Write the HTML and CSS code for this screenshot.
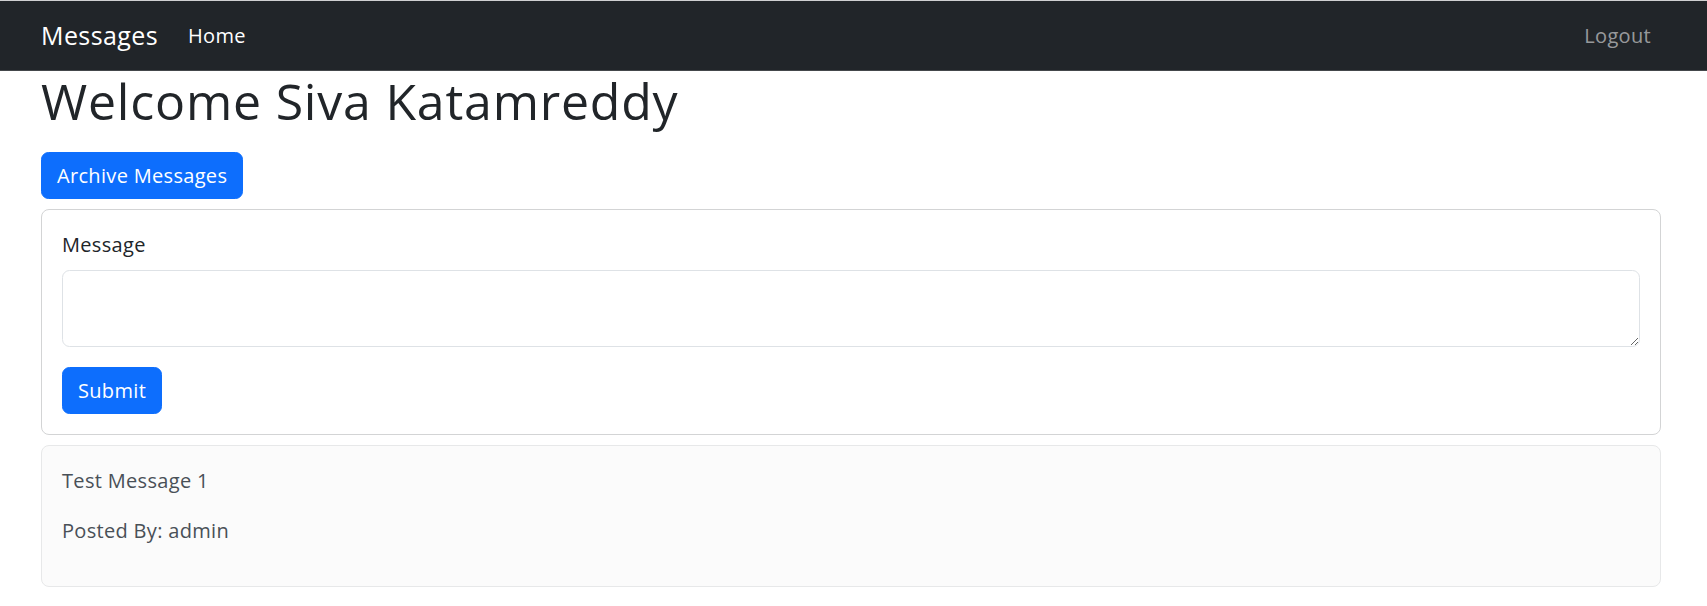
FILE: index.html
```html
<!DOCTYPE html>
<html lang="en">
<head>
<meta charset="utf-8">
<title>Messages</title>
<link rel="stylesheet" href="styles.css">
</head>
<body>
<nav class="navbar">
  <a class="brand" href="#">Messages</a>
  <ul class="nav-links">
    <li><a class="nav-link active" href="#">Home</a></li>
  </ul>
  <ul class="nav-links nav-right">
    <li><a class="nav-link" href="#">Logout</a></li>
  </ul>
</nav>
<main class="container">
  <h1 class="title">Welcome Siva Katamreddy</h1>
  <a class="btn" href="#">Archive Messages</a>
  <div class="card form-card">
    <form class="msg-form">
      <label class="form-label" for="message">Message</label>
      <textarea class="form-control" id="message" rows="2"></textarea>
      <button class="btn" type="button">Submit</button>
    </form>
  </div>
  <div class="card msg-card">
    <p>Test Message 1</p>
    <p>Posted By: admin</p>
  </div>
</main>
</body>
</html>
```
FILE: styles.css
```css
* { box-sizing: border-box; }
html, body { margin: 0; padding: 0; }
body {
  border-top: 1px solid #cfd0d1;
  background: #fff;
  color: #212529;
  font-family: "Open Sans", "Noto Sans", sans-serif;
  font-size: 20px;
  line-height: 30px;
  letter-spacing: 0.016em;
}
a { text-decoration: none; }

.navbar {
  display: flex;
  align-items: center;
  height: 70px;
  padding: 0 56px 0 41px;
  background: #212529;
  box-shadow: inset 0 -1px 0 #44474b;
}
.brand {
  color: #fff;
  font-size: 25px;
  line-height: 37.5px;
  letter-spacing: 0.016em;
  margin-right: 30px;
}
.nav-links {
  display: flex;
  list-style: none;
  margin: 0;
  padding: 0;
}
.nav-right { margin-left: auto; }
.nav-link {
  color: rgba(255, 255, 255, 0.55);
  font-size: 20px;
  line-height: 30px;
}
.nav-link.active { color: #fff; }

.container {
  padding: 0 46px 20px 41px;
}
.title {
  margin: 0 0 21px;
  font-size: 50px;
  line-height: 60px;
  font-weight: 400;
  letter-spacing: 0.016em;
}

.btn {
  display: inline-block;
  padding: 7.5px 15px;
  border: 1px solid #0d6efd;
  border-radius: 7.5px;
  background: #0d6efd;
  color: #fff;
  font: inherit;
  letter-spacing: inherit;
  line-height: 30px;
  cursor: pointer;
}

.card {
  border: 1px solid #d3d4d5;
  border-radius: 8px;
  padding: 20px;
  margin-top: 10px;
  background: #fff;
}
.msg-form {
  display: flex;
  flex-direction: column;
  align-items: flex-start;
}
.form-label {
  margin-bottom: 10px;
}
.form-control {
  width: 100%;
  height: 77px;
  margin-bottom: 20px;
  padding: 7.5px 15px;
  border: 1px solid #dee2e6;
  border-radius: 7.5px;
  font: inherit;
  letter-spacing: inherit;
  line-height: 30px;
  color: #212529;
  resize: vertical;
}

.msg-card {
  background: #fbfbfb;
  border-color: #e7e8e9;
  color: #495057;
}
.msg-card p { margin: 0 0 20px; }
```
